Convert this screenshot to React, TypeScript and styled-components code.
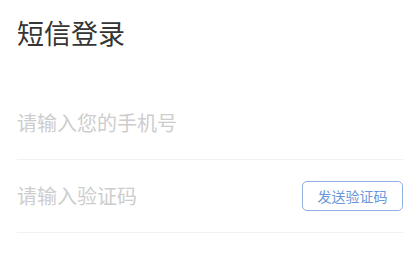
import React from "react";
import styled, { createGlobalStyle } from "styled-components";

const Global = createGlobalStyle`
  html, body { margin: 0; padding: 0; background: #fff; }
  body { font-family: "Noto Sans CJK SC", "Noto Sans", sans-serif; }
  * { box-sizing: border-box; }
`;

const Page = styled.div`
  width: 420px;
  height: 253px;
  padding: 15px 17px 0;
  background: #fff;
`;

const Title = styled.h1`
  margin: 0 0 36px;
  font-size: 27px;
  line-height: 36px;
  font-weight: 400;
  color: #353535;
`;

const Row = styled.div`
  height: 73px;
  display: flex;
  align-items: center;
  justify-content: space-between;
  border-bottom: 1px solid #f1f1f1;
`;

const Input = styled.input`
  flex: 1;
  min-width: 0;
  border: none;
  outline: none;
  padding: 0;
  background: transparent;
  font-family: inherit;
  font-size: 20px;
  line-height: 28px;
  color: #333;
  &::placeholder { color: #cdcdcd; }
`;

const SendButton = styled.button`
  width: 101px;
  height: 30px;
  border: 1px solid #8eb1e2;
  border-radius: 5px;
  background: #fff;
  color: #6a97d8;
  font-family: inherit;
  font-size: 14px;
  padding: 0;
  cursor: pointer;
`;

export default function App() {
  return (
    <>
      <Global />
      <Page>
        <Title>短信登录</Title>
        <Row>
          <Input placeholder="请输入您的手机号" />
        </Row>
        <Row>
          <Input placeholder="请输入验证码" />
          <SendButton>发送验证码</SendButton>
        </Row>
      </Page>
    </>
  );
}
